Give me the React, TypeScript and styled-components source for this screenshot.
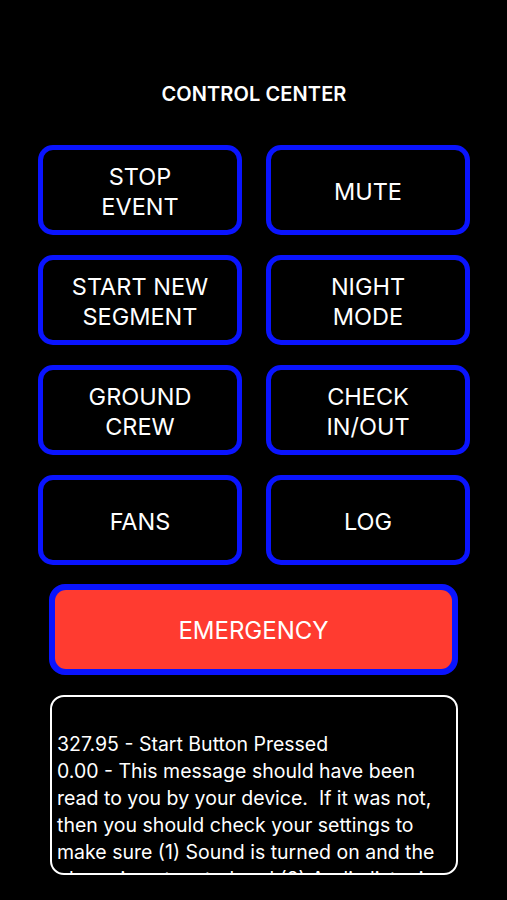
import React from 'react';
import styled, { createGlobalStyle } from 'styled-components';

const GlobalStyle = createGlobalStyle`
  html, body {
    margin: 0;
    padding: 0;
    background: #000;
  }
  body {
    font-family: Inter, "Liberation Sans", Arial, sans-serif;
    color: #fff;
  }
`;

const controls = [
  ['STOP', 'EVENT'],
  ['MUTE'],
  ['START NEW', 'SEGMENT'],
  ['NIGHT', 'MODE'],
  ['GROUND', 'CREW'],
  ['CHECK', 'IN/OUT'],
  ['FANS'],
  ['LOG']
];

const logText = `327.95 - Start Button Pressed
0.00 - This message should have been read to you by your device.  If it was not, then you should check your settings to make sure (1) Sound is turned on and the phone is not muted and (2) Audio listening is enabled on your device.`;

const ControlCenter = () => {
  return (
    <Page>
      <GlobalStyle />
      <Title>CONTROL CENTER</Title>
      <ButtonGrid>
        {controls.map((lines) => (
          <ControlButton key={lines.join(' ')}>
            {lines.map((l) => (
              <span key={l}>{l}</span>
            ))}
          </ControlButton>
        ))}
      </ButtonGrid>
      <EmergencyFrame>
        <EmergencyButton>EMERGENCY</EmergencyButton>
      </EmergencyFrame>
      <LogBox>
        {logText.split('\n').map((line, i) => (
          <LogLine key={i}>{line}</LogLine>
        ))}
      </LogBox>
    </Page>
  );
};

const Page = styled.div`
  width: 507px;
  height: 900px;
  overflow: hidden;
  background: #000;
  box-sizing: border-box;
  padding: 82px 37px 0 38px;
  display: flex;
  flex-direction: column;
`;

const Title = styled.div`
  text-align: center;
  font-size: 20px;
  font-weight: 600;
  line-height: 24px;
  letter-spacing: 0.1px;
  margin-bottom: 39px;
`;

const ButtonGrid = styled.div`
  display: grid;
  grid-template-columns: 204px 204px;
  grid-auto-rows: 90px;
  column-gap: 24px;
  row-gap: 20px;
`;

const ControlButton = styled.button`
  box-sizing: border-box;
  border: 5px solid #0a14ff;
  border-radius: 15px;
  background: #000;
  color: #fff;
  font-family: inherit;
  font-size: 23.5px;
  line-height: 30px;
  display: flex;
  flex-direction: column;
  align-items: center;
  justify-content: center;
  padding: 3px 0 0;
`;

const EmergencyFrame = styled.div`
  box-sizing: border-box;
  margin: 19px 0 0 11px;
  width: 409px;
  height: 91px;
  border: 5px solid #0a14ff;
  border-radius: 16px;
  padding: 1px;
  background: #0a14ff;
  display: flex;
`;

const EmergencyButton = styled.button`
  flex: 1;
  border: none;
  border-radius: 11px;
  background: #ff3b30;
  color: #fff;
  font-family: inherit;
  font-size: 24px;
  padding: 2px 0 0;
`;

const LogBox = styled.div`
  box-sizing: border-box;
  margin: 20px 0 0 12px;
  width: 408px;
  height: 180px;
  border: 2px solid #fff;
  border-radius: 14px;
  padding: 34px 8px 0 5px;
  overflow: hidden;
  font-size: 19.5px;
  line-height: 27px;
`;

const LogLine = styled.div`
  white-space: pre-wrap;
`;

export default ControlCenter;
